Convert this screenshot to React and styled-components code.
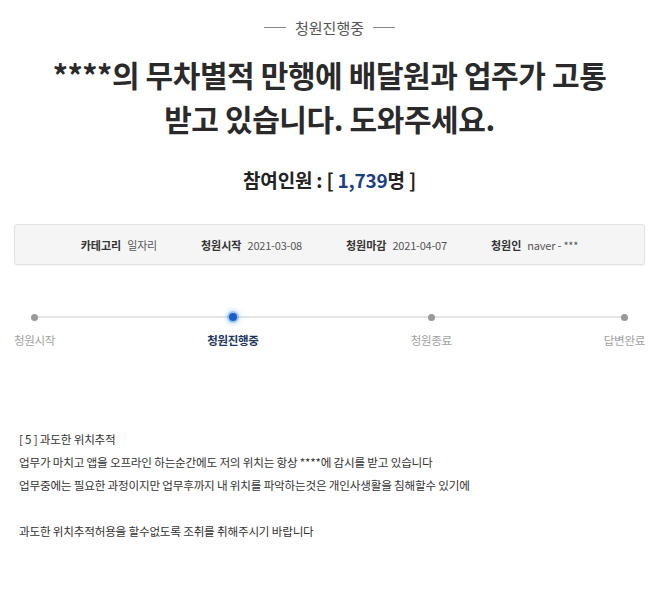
import React from "react";
import styled, { createGlobalStyle } from "styled-components";

const GlobalStyle = createGlobalStyle`
  html, body { margin: 0; padding: 0; background: #fff; }
  body { font-family: "Noto Sans CJK KR", "Noto Sans", sans-serif; color: #222; }
`;

const Page = styled.div`
  width: 658px;
  box-sizing: border-box;
  padding: 17px 13px 40px 14px;
`;

const StatusTag = styled.div`
  display: flex;
  align-items: center;
  justify-content: center;
  gap: 9px;
  height: 20px;
  font-size: 15px;
  color: #555;
  &::before, &::after {
    content: "";
    width: 22px;
    height: 1px;
    background: #888;
  }
`;

const Title = styled.h1`
  margin: 15px 0 0;
  text-align: center;
  font-size: 30px;
  line-height: 44px;
  font-weight: 700;
  color: #2a2a2a;
  letter-spacing: -0.4px;
`;

const Count = styled.div`
  margin-top: 26px;
  text-align: center;
  font-size: 19px;
  line-height: 28px;
  font-weight: 700;
  color: #222;
  letter-spacing: -0.2px;
`;

const CountNum = styled.span`
  color: #1c3f7f;
`;

const InfoBox = styled.div`
  margin-top: 30px;
  height: 41px;
  box-sizing: border-box;
  border: 1px solid #e2e2e2;
  border-radius: 3px;
  background: #f5f5f5;
  box-shadow: 0 1px 2px rgba(0, 0, 0, 0.06);
  display: flex;
  align-items: center;
  justify-content: center;
  gap: 44px;
  font-size: 11px;
`;

const InfoItem = styled.div`
  display: flex;
  align-items: center;
  gap: 6px;
`;

const InfoLabel = styled.span`
  font-weight: 700;
  color: #333;
`;

const InfoValue = styled.span`
  color: #555;
  letter-spacing: -0.2px;
`;

const Progress = styled.div`
  margin-top: 45px;
  position: relative;
`;

const Track = styled.div`
  position: absolute;
  top: 6px;
  left: 20px;
  right: 20px;
  height: 2px;
  background: #e6e6e6;
`;

const Steps = styled.div`
  position: relative;
  display: flex;
  justify-content: space-between;
`;

const Step = styled.div`
  display: flex;
  flex-direction: column;
  align-items: center;
  gap: 8px;
`;

const DotSlot = styled.div`
  height: 14px;
  display: flex;
  align-items: center;
  justify-content: center;
`;

const Dot = styled.span`
  width: ${(p) => (p.$active ? 8 : 7)}px;
  height: ${(p) => (p.$active ? 8 : 7)}px;
  border-radius: 50%;
  background: ${(p) => (p.$active ? "#1a5fc4" : "#9a9a9a")};
  box-shadow: ${(p) =>
    p.$active ? "0 0 0 2px rgba(60,140,230,0.35), 0 0 5px 3px rgba(90,160,240,0.35)" : "none"};
`;

const StepLabel = styled.span`
  font-size: 11.5px;
  line-height: 16px;
  letter-spacing: -0.3px;
  color: ${(p) => (p.$active ? "#1d355f" : "#a0a0a0")};
  font-weight: ${(p) => (p.$active ? 700 : 400)};
`;

const Body = styled.div`
  margin-top: 80px;
  padding-left: 5px;
  font-size: 11.6px;
  line-height: 23px;
  color: #333;
  letter-spacing: -0.2px;
`;

const Line = styled.p`
  margin: 0;
  min-height: 23px;
`;

const steps = ["청원시작", "청원진행중", "청원종료", "답변완료"];

export default function App() {
  return (
    <>
      <GlobalStyle />
      <Page>
        <StatusTag>청원진행중</StatusTag>
        <Title>
          ****의 무차별적 만행에 배달원과 업주가 고통
          <br />
          받고 있습니다. 도와주세요.
        </Title>
        <Count>
          참여인원 : [ <CountNum>1,739</CountNum>명 ]
        </Count>
        <InfoBox>
          <InfoItem>
            <InfoLabel>카테고리</InfoLabel>
            <InfoValue>일자리</InfoValue>
          </InfoItem>
          <InfoItem>
            <InfoLabel>청원시작</InfoLabel>
            <InfoValue>2021-03-08</InfoValue>
          </InfoItem>
          <InfoItem>
            <InfoLabel>청원마감</InfoLabel>
            <InfoValue>2021-04-07</InfoValue>
          </InfoItem>
          <InfoItem>
            <InfoLabel>청원인</InfoLabel>
            <InfoValue>naver - ***</InfoValue>
          </InfoItem>
        </InfoBox>
        <Progress>
          <Track />
          <Steps>
            {steps.map((s, i) => (
              <Step key={s}>
                <DotSlot>
                  <Dot $active={i === 1} />
                </DotSlot>
                <StepLabel $active={i === 1}>{s}</StepLabel>
              </Step>
            ))}
          </Steps>
        </Progress>
        <Body>
          <Line>[ 5 ] 과도한 위치추적</Line>
          <Line>업무가 마치고 앱을 오프라인 하는순간에도 저의 위치는 항상 ****에 감시를 받고 있습니다</Line>
          <Line>업무중에는 필요한 과정이지만 업무후까지 내 위치를 파악하는것은 개인사생활을 침해할수 있기에</Line>
          <Line />
          <Line>과도한 위치추적허용을 할수없도록 조취를 취해주시기 바랍니다</Line>
        </Body>
      </Page>
    </>
  );
}
